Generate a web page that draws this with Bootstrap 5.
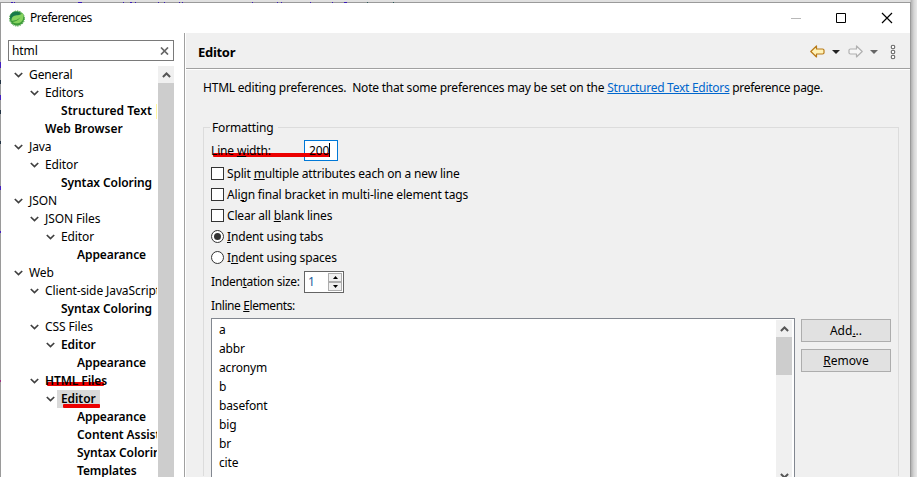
<!DOCTYPE html>
<html lang="en">
<head>
<meta charset="utf-8">
<title>Preferences</title>
<link href="https://cdn.jsdelivr.net/npm/bootstrap@5.3.0/dist/css/bootstrap.min.css" rel="stylesheet">
<style>
body{width:917px;height:477px;overflow:hidden;background:#e0e0e0;font-family:"Noto Sans","Open Sans",sans-serif;font-size:12px;line-height:18px;color:#000;letter-spacing:-.1px}
svg{display:block;flex:none}
.desk{height:477px;padding-top:2px;overflow:hidden;background:linear-gradient(90deg,#e0e0e0 910px,#b0b0b0 911px,#d6d6d6 914px,#e8e8e8 917px)}
.win{width:911px;height:475px;border:1px solid #9a9a9a;border-bottom:0;background:#fff;overflow:hidden}
.specks{position:absolute;left:0;top:2px}
.titlebar{height:30px;flex:none;padding:0 17px 0 8px}
.titlebar span{letter-spacing:-.45px;margin-left:5px}
.side{width:184px;border-right:1px solid #a0a0a0}
.search{margin:7px 10px 0 7px;height:21px;border:1px solid #7a7a7a;padding:0 4px 0 3px;width:166px;font-size:12px}
.tree{margin:5px 0 0 7px;height:411px;width:166px}
.rows{width:149px;overflow:hidden}
.node{height:18px;white-space:nowrap;padding-left:6px}
.node svg{margin-right:6px}
.l1{padding-left:22px}.l2{padding-left:38px}.l3{padding-left:54px}
.leaf{padding-left:calc(var(--n)*16px + 21px)}
.leaf1{--n:1}.leaf2{--n:2}.leaf3{--n:3}
.strong{font-weight:600;letter-spacing:-.08px}
.wide{letter-spacing:.07px}
.sliver{width:1px;height:15px;background:#fff7a0}
.sel{background:#d9d9d9;padding:0 4px;margin-left:-4px}
.bar{width:16px;background:#cdcdcd}
.bar-top{height:17px;background:#f0f0f0}
.main{background:#f0f0f0;margin-left:1px;width:724px}
.head{height:36px;border-bottom:1px solid #a0a0a0;box-shadow:0 1px #fff;padding:2px 12px 0 12px}
.head b{font-size:13px;font-weight:700;letter-spacing:-.3px}
.intro{padding:10px 0 0 17px;white-space:pre;letter-spacing:-.21px}
.intro a{color:#0066cc;letter-spacing:-.27px}
.intro .tail{letter-spacing:-.32px}
.group{margin:30px 11px 0 17px;border:1px solid #dcdcdc;border-bottom:0;height:349px;padding:0 7px;letter-spacing:-.16px}
.legend{width:68px;margin-top:-9px;background:#f0f0f0;height:18px;padding-left:2px;margin-left:-1px}
.width-row{margin-top:3px}
.lw{width:60px}
.field{height:21px;border:1px solid #0078d7;background:#fff;width:34px;padding-left:4px;margin-left:33px;line-height:19px}
.caret{width:1px;height:14px;background:#000;margin-top:2px}
.opts{padding-top:2px}
.opt{height:21px;gap:3px}
.box{width:13px;height:13px;border:1px solid #333;background:#fff}
.round{border-radius:50%}
.dot{width:7px;height:7px;border-radius:50%;background:#333;margin:2px}
.indent{width:133px;margin-top:3px}
.indent>span{letter-spacing:-.3px}
.spin{width:40px;height:22px;border:1px solid #646464;background:#fff;padding:1px 1px 1px 3px;color:#1c5c9c}
.spin i{width:14px;height:9px;border:1px solid #adadad;background:#f0f0f0}
.inline-label{letter-spacing:-.4px}
.list{width:584px;flex:none;height:200px;border:1px solid #828790;background:#fff;padding:1px 2px 0 7px;margin-top:3px}
.list li{height:19px;line-height:20px}
.scroll{background:#f0f0f0;width:16px}
.thumb{height:38px;background:#cdcdcd}
.down{margin-top:98px;transform:rotate(180deg)}
.keys{padding-left:6px;gap:7px}
.key{width:90px;height:23px;border:1px solid #adadad;background:#e1e1e1;border-radius:0;font-size:12px;line-height:20px;padding:0;color:#000}
.mark-line{position:absolute;background:#ec0000;height:4px;border-radius:1px}
.over{position:relative;z-index:2}
</style>
<script src="https://cdn.jsdelivr.net/npm/bootstrap@5.3.0/dist/js/bootstrap.bundle.min.js"></script>
</head>
<body>
<svg width="0" height="0" class="position-absolute">
<symbol id="chev" viewBox="0 0 9 6"><path d="M.8 1 4.5 4.6 8.2 1" fill="none" stroke="#404040" stroke-width="1.7"/></symbol>
<symbol id="up" viewBox="0 0 9 6"><path d="M.9 5 4.5 1.5 8.1 5" fill="none" stroke="#555" stroke-width="2"/></symbol>
<symbol id="arrow" viewBox="0 0 15 13"><path d="M.8 6.5 6.5 1V4H12.5Q14 4 14 5.2V7.8Q14 9 12.5 9H6.5V12Z" stroke-linejoin="round"/></symbol>
</svg>
<div class="desk">
<svg class="specks" width="440" height="400"><path d="M11 .5h2M14 .5h1M78 .5h4M123 .5h1M130 .5h2M135 .5h1M158 .5h1M164 .5h1M179 .5h1M182 .5h1M252 .5h1M277 .5h1M281 .5h1M310 .5h1M332 .5h1M344 .5h3" stroke="#3a18b8"/><path d="M367 .5h1M393 .5h1" stroke="#285858"/><path d="M.5 60v6M.5 93v5M.5 184v4M.5 229v2" stroke="#4420c0"/><path d="M.5 78v4M.5 108v4M.5 139v3" stroke="#234"/><path d="M.5 378v2" stroke="#a03080"/></svg>
<div class="win d-flex flex-column">
<header class="titlebar d-flex align-items-center">
<svg width="16" height="17" viewBox="0 0 16 17"><circle cx="8" cy="8.5" r="7.2" fill="#3c9b38"/><circle cx="8" cy="8.5" r="7.5" fill="none" stroke="#3c9b38" stroke-width="1" stroke-dasharray="1.5 1"/><path d="M1 7C1 3 5 .8 10 2L12 5 2 11Z" fill="#187a4a"/><path d="M2.5 11C2 6 6 5.3 9 5.2 12 5 13 3.8 13.6 2.8 15.3 7 14.3 12 10 13 7.5 13.7 5 13 3.5 12 7 11.5 9.8 10 11.5 7.3 9 9.8 6 10.7 2.5 11Z" fill="#86d35f"/></svg>
<span>Preferences</span>
<svg class="ms-auto" width="102" height="12" viewBox="0 0 102 12"><path d="M0 6.5h10" stroke="#b8b8b8"/><path d="M45.5 1.5h9v9h-9z" fill="none" stroke="#000"/><path d="m91 1 10 10M101 1 91 11" stroke="#000" stroke-width="1.2"/></svg>
</header>
<div class="d-flex flex-grow-1">
<aside class="side">
<div class="search d-flex align-items-center justify-content-between"><span>html</span><svg width="9" height="8" viewBox="0 0 9 8"><path d="m1 .5 7 7M8 .5l-7 7" stroke="#666" stroke-width="1.7"/></svg></div>
<div class="tree d-flex overflow-hidden">
<div class="rows">
<div class="node d-flex align-items-center"><svg width="9" height="6"><use href="#chev"/></svg><span>General</span></div>
<div class="node l1 d-flex align-items-center"><svg width="9" height="6"><use href="#chev"/></svg><span>Editors</span></div>
<div class="node leaf leaf2 strong d-flex align-items-center justify-content-between"><span class="wide">Structured Text</span><span class="sliver"></span></div>
<div class="node leaf leaf1 strong"><span class="wide">Web Browser</span></div>
<div class="node d-flex align-items-center"><svg width="9" height="6"><use href="#chev"/></svg><span>Java</span></div>
<div class="node l1 d-flex align-items-center"><svg width="9" height="6"><use href="#chev"/></svg><span>Editor</span></div>
<div class="node leaf leaf2 strong">Syntax Coloring</div>
<div class="node d-flex align-items-center"><svg width="9" height="6"><use href="#chev"/></svg><span>JSON</span></div>
<div class="node l1 d-flex align-items-center"><svg width="9" height="6"><use href="#chev"/></svg><span>JSON Files</span></div>
<div class="node l2 d-flex align-items-center"><svg width="9" height="6"><use href="#chev"/></svg><span>Editor</span></div>
<div class="node leaf leaf3 strong">Appearance</div>
<div class="node d-flex align-items-center"><svg width="9" height="6"><use href="#chev"/></svg><span>Web</span></div>
<div class="node l1 d-flex align-items-center"><svg width="9" height="6"><use href="#chev"/></svg><span>Client-side JavaScript</span></div>
<div class="node leaf leaf2 strong">Syntax Coloring</div>
<div class="node l1 d-flex align-items-center"><svg width="9" height="6"><use href="#chev"/></svg><span>CSS Files</span></div>
<div class="node l2 d-flex align-items-center"><svg width="9" height="6"><use href="#chev"/></svg><span class="strong">Editor</span></div>
<div class="node leaf leaf3 strong">Appearance</div>
<div class="node l1 d-flex align-items-center"><svg width="9" height="6"><use href="#chev"/></svg><span class="strong over">HTML Files</span></div>
<div class="node l2 d-flex align-items-center"><svg width="9" height="6"><use href="#chev"/></svg><span class="strong sel">Editor</span></div>
<div class="node leaf leaf3 strong">Appearance</div>
<div class="node leaf leaf3 strong">Content Assist</div>
<div class="node leaf leaf3 strong">Syntax Coloring</div>
<div class="node leaf leaf3 strong">Templates</div>
</div>
<div class="bar ms-auto"><div class="bar-top d-flex align-items-center justify-content-center"><svg width="9" height="6"><use href="#up"/></svg></div></div>
</div>
</aside>
<main class="main">
<div class="head d-flex align-items-center"><b>Editor</b>
<svg class="ms-auto" width="88" height="16" viewBox="0 0 88 16"><use href="#arrow" y="1" width="15" height="13" fill="#fff2b8" stroke="#b87a18" stroke-width="1.2"/><path d="M22 6h8l-4 4z" fill="#222"/><use href="#arrow" width="15" height="13" transform="matrix(-1 0 0 1 53 1)" fill="#f6f6f6" stroke="#b0b0b0" stroke-width="1.2"/><path d="M60 6h8l-4 4z" fill="#666"/><g fill="#fff" stroke="#666" stroke-width="1.1"><circle cx="83" cy="3" r="1.8"/><circle cx="83" cy="8" r="1.8"/><circle cx="83" cy="13" r="1.8"/></g></svg></div>
<div class="intro">HTML editing preferences.  Note that some preferences may be set on the <a href="#">Structured Text Editors</a><span class="tail"> preference page.</span></div>
<section class="group">
<div class="legend"><span>Formatting</span></div>
<div class="width-row d-flex align-items-center"><span class="over lw">Line <u>w</u>idth:</span><div class="field d-flex"><span class="over">200</span><span class="caret over"></span></div></div>
<div class="opts">
<div class="opt d-flex align-items-center"><span class="box"></span><span>Split <u>m</u>ultiple attributes each on a new line</span></div>
<div class="opt d-flex align-items-center"><span class="box"></span><span>Ali<u>g</u>n final bracket in multi-line element tags</span></div>
<div class="opt d-flex align-items-center"><span class="box"></span><span>Clear all <u>b</u>lank lines</span></div>
<div class="opt d-flex align-items-center"><span class="box round"><span class="dot d-block"></span></span><span><u>I</u>ndent using tabs</span></div>
<div class="opt d-flex align-items-center"><span class="box round"></span><span>I<u>n</u>dent using spaces</span></div>
</div>
<div class="indent d-flex align-items-center justify-content-between"><span>Inden<u>t</u>ation size:</span><div class="spin d-flex justify-content-between"><span>1</span><div><i class="d-flex align-items-center justify-content-center"><svg width="5" height="3"><path d="M0 3h5L2.5 0z"/></svg></i><i class="d-flex align-items-center justify-content-center"><svg width="5" height="3"><path d="M0 0h5L2.5 3z"/></svg></i></div></div></div>
<div class="mt-1 inline-label">Inline <u>E</u>lements:</div>
<div class="d-flex">
<div class="list d-flex"><ul class="list-unstyled mb-0 flex-grow-1"><li>a</li><li>abbr</li><li>acronym</li><li>b</li><li>basefont</li><li>big</li><li>br</li><li>cite</li></ul>
<div class="scroll"><div class="bar-top d-flex align-items-center justify-content-center"><svg width="9" height="6"><use href="#up"/></svg></div><div class="thumb"></div><svg class="down mx-auto" width="9" height="6"><use href="#up"/></svg></div></div>
<div class="d-flex flex-column keys"><button class="btn key mt-1">Add<u>.</u>..</button><button class="btn key"><u>R</u>emove</button></div>
</div>
</section>
</main>
</div>
</div>
</div>
<span class="mark-line" style="left:213px;top:153px;width:117px"></span>
<span class="mark-line" style="left:47px;top:382px;width:57px"></span>
<span class="mark-line" style="left:63px;top:404px;width:37px"></span>
</body>
</html>
